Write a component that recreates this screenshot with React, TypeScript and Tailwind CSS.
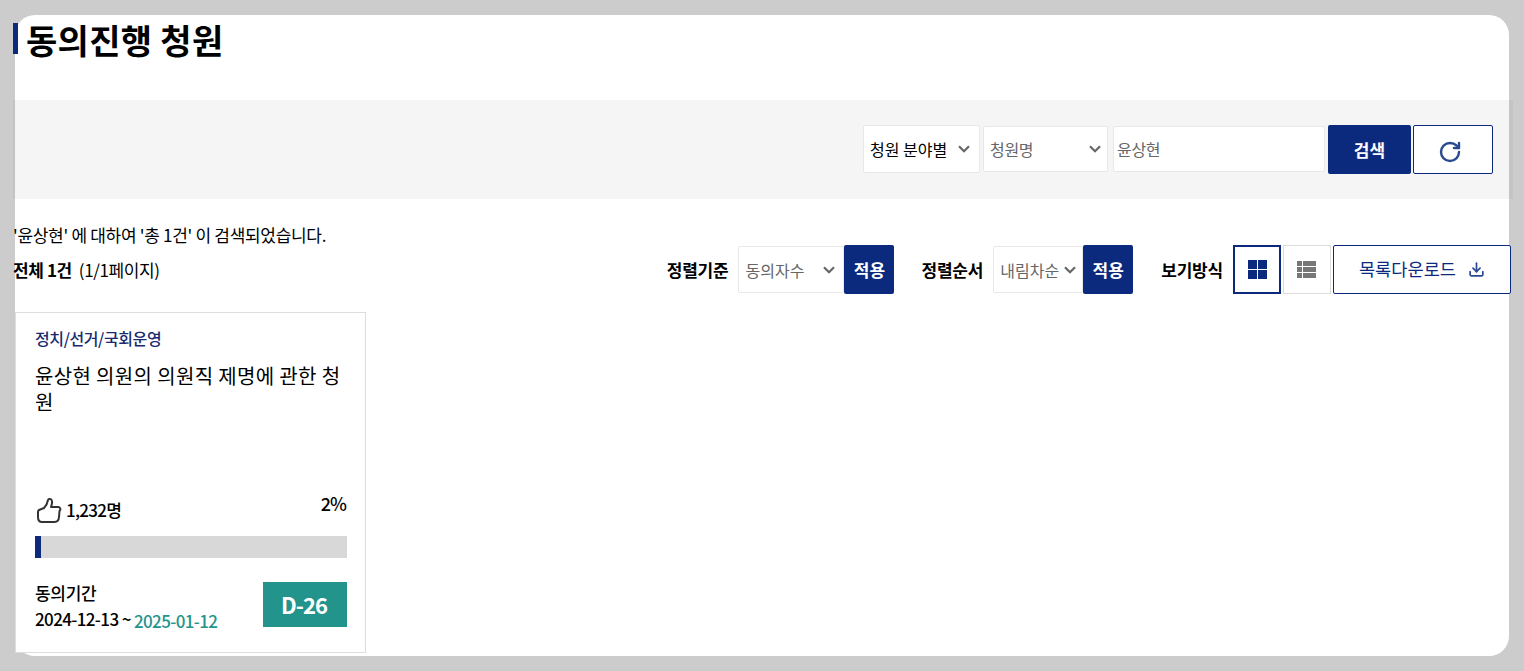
import { Download, RotateCw } from "lucide-react";

const font = { fontFamily: '"Noto Sans CJK KR", "Noto Sans", sans-serif' };

function Chevron({ className }: { className: string }) {
    return (
        <svg viewBox="0 0 12 8" className={className} fill="none" stroke="currentColor" strokeWidth="2.2">
            <path d="M1 1.2 L6 6.2 L11 1.2" />
        </svg>
    );
}

function FakeSelect({ label, className }: { label: string; className: string }) {
    return (
        <div className={`flex items-center justify-between bg-white border border-[#e8e8e8] rounded-[2px] ${className}`}>
            <span className="whitespace-nowrap">{label}</span>
            <Chevron className="w-3 h-2 text-[#666]" />
        </div>
    );
}

function ApplyButton() {
    return (
        <button className="w-[50px] h-[49px] bg-[#0b2a7e] text-white text-[17px] font-bold rounded-[2px]">적용</button>
    );
}

export default function App() {
    return (
        <div style={font} className="w-[1524px] h-[671px] overflow-hidden bg-[#cccccc] pt-[15px] pl-[15px] text-black">
            <div className="w-[1494px] h-[641px] bg-white rounded-[20px]">
                <div className="h-[85px] pt-[8px]">
                    <h1 className="-ml-[2px] border-l-[5px] border-[#0b2a7e] h-[31px] pl-[8px] text-[34px] leading-[34px] font-bold tracking-[0.3px] whitespace-nowrap">
                        동의진행 청원
                    </h1>
                </div>

                <div className="-ml-[2px] w-[1500px] h-[99px] bg-black/[0.04] flex justify-end items-start pt-[25px] pr-[20px]">
                    <FakeSelect label="청원 분야별" className="w-[117px] h-[48px] pl-[6px] pr-[9px] text-[16px]" />
                    <FakeSelect label="청원명" className="w-[125px] h-[46px] mt-[1px] ml-[3px] pl-[6px] pr-[6px] text-[16px] tracking-[-0.3px] text-[#666]" />
                    <div className="w-[212px] h-[46px] mt-[1px] ml-[5px] pl-[3px] flex items-center bg-white border border-[#e8e8e8] rounded-[2px] text-[16px] tracking-[-0.3px] text-[#666]">
                        윤상현
                    </div>
                    <button className="w-[83px] h-[49px] ml-[3px] bg-[#0b2a7e] text-white text-[17px] font-bold rounded-[2px]">검색</button>
                    <button className="w-[80px] h-[49px] ml-[2px] bg-white border border-[#0b2a7e] rounded-[2px] flex items-center justify-center">
                        <RotateCw className="w-[24px] h-[24px] text-[#2a4a90] mt-[4px] mr-[7px]" strokeWidth={2.4} />
                    </button>
                </div>

                <div className="-ml-[2px] w-[1498px] h-[113px] relative flex justify-between">
                    <div className="pt-[24px]">
                        <p className="text-[17px] leading-[24px] tracking-[-0.3px] whitespace-nowrap">'윤상현' 에 대하여 '총 1건' 이 검색되었습니다.</p>
                        <p className="mt-[11px] text-[17px] leading-[24px] tracking-[-0.4px] whitespace-nowrap">
                            <b>전체 1건</b>
                            <span className="ml-[7px]">(1/1페이지)</span>
                        </p>
                    </div>
                    <div className="flex items-start pt-[46px] text-[17px]">
                        <span className="font-bold leading-[49px] mr-[10px] tracking-[-0.2px]">정렬기준</span>
                        <FakeSelect label="동의자수" className="w-[106px] h-[47px] mt-[1px] pl-[6px] pr-[8px] text-[16px] text-[#666]" />
                        <ApplyButton />
                        <span className="font-bold leading-[49px] ml-[27px] mr-[10px] tracking-[-0.2px]">정렬순서</span>
                        <FakeSelect label="내림차순" className="w-[90px] h-[47px] mt-[1px] pl-[6px] pr-[6px] text-[16px] text-[#666]" />
                        <ApplyButton />
                        <span className="font-bold leading-[49px] ml-[28px] mr-[10px] tracking-[-0.2px]">보기방식</span>
                        <button className="w-[48px] h-[49px] bg-white border-2 border-[#0b2a7e] flex items-center justify-center">
                            <div className="grid grid-cols-2 gap-[1px] w-[19px] h-[19px]">
                                <div className="bg-[#0b2a7e]" />
                                <div className="bg-[#0b2a7e]" />
                                <div className="bg-[#0b2a7e]" />
                                <div className="bg-[#0b2a7e]" />
                            </div>
                        </button>
                        <button className="w-[48px] h-[49px] ml-[2px] bg-white border border-[#dddddd] flex items-center justify-center">
                            <div className="grid grid-cols-[5px_13px] gap-[1px] w-[19px] mr-[1px]">
                                <div className="h-[5px] bg-[#777]" />
                                <div className="h-[5px] bg-[#777]" />
                                <div className="h-[5px] bg-[#777]" />
                                <div className="h-[5px] bg-[#777]" />
                                <div className="h-[5px] bg-[#777]" />
                                <div className="h-[5px] bg-[#777]" />
                            </div>
                        </button>
                        <button className="w-[178px] h-[49px] ml-[2px] bg-white border border-[#0b2a7e] rounded-[2px] flex items-center justify-center gap-[12px] text-[17.6px] text-[#0b2a7e]">
                            목록다운로드
                            <Download className="w-[17px] h-[17px] text-[#2a4a90]" strokeWidth={2.4} />
                        </button>
                    </div>
                </div>

                <div className="w-[351px] h-[341px] border border-[#dddddd] bg-white pl-[19px] pr-[18px] pt-[13px]">
                    <p className="text-[16px] leading-[24px] font-medium tracking-[-0.4px] text-[#1a2a70]">정치/선거/국회운영</p>
                    <p className="mt-[13px] text-[20px] leading-[26px] tracking-[0.35px] h-[125px]">윤상현 의원의 의원직 제명에 관한 청원</p>
                    <div className="flex justify-between items-start h-[48px]">
                        <div className="flex items-center pt-[9px]">
                            <svg viewBox="0 0 26 26" className="w-[26px] h-[26px] ml-[1px]" fill="none" stroke="#333" strokeWidth="2" strokeLinejoin="round">
                                <path d="M3 13 L8 11 C10 9 11.5 6 12 3 C12.2 1.5 15.5 1.5 16 4 C16.5 6 15.5 8.5 15 10 L22 10 C24.5 10 25 12.5 23.5 14 L23 20 C22.8 23 21 25 18.5 25 L6 25 C3 25 2 23 2 20 L2 15 C2 14 2.4 13.3 3 13 Z" />
                            </svg>
                            <span className="ml-[4px] text-[17px] leading-[24px] font-medium tracking-[-0.7px]">1,232명</span>
                        </div>
                        <span className="text-[18px] leading-[24px] font-medium tracking-[-1px] mt-[3px] mr-[1px]">2%</span>
                    </div>
                    <div className="w-[312px] h-[22px] bg-[#d8d8d8]">
                        <div className="w-[6px] h-full bg-[#0b2a7e]" />
                    </div>
                    <div className="flex justify-between items-start mt-[24px]">
                        <div className="-mt-[1px]">
                            <p className="text-[17px] leading-[24px] font-medium tracking-[-0.3px]">동의기간</p>
                            <p className="mt-[2px] text-[17px] leading-[24px] font-medium tracking-[-0.62px] whitespace-nowrap">
                                2024-12-13 ~ <span className="text-[#23948c] align-[-2px]">2025-01-12</span>
                            </p>
                        </div>
                        <div className="w-[84px] h-[45px] pr-[2px] bg-[#23948c] text-white text-[22px] font-bold tracking-[-1px] flex items-center justify-center">D-26</div>
                    </div>
                </div>
            </div>
        </div>
    );
}
